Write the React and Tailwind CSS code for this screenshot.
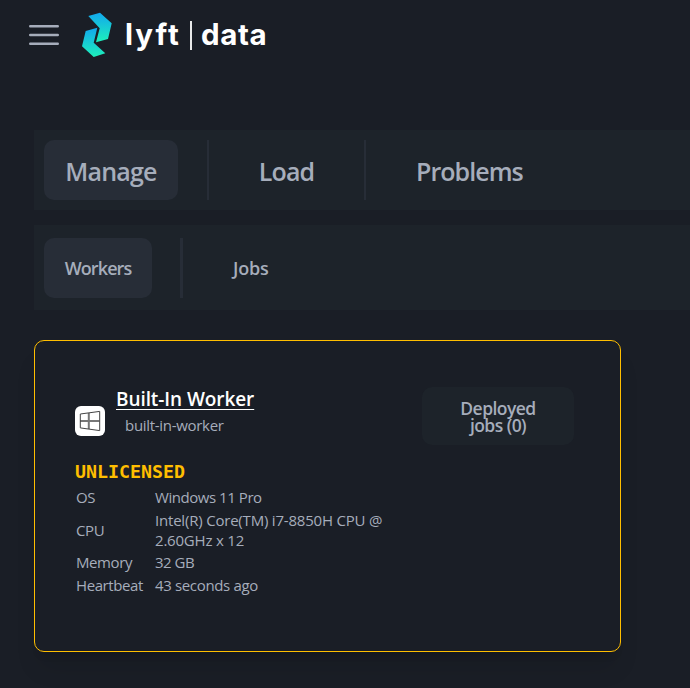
function MenuIcon() {
  return (
    <svg className="mt-[24px] h-[22px] w-[30px] shrink-0" viewBox="0 0 30 22" fill="none" stroke="#a6adbb" strokeWidth="2.4" strokeLinecap="round">
      <path d="M1.2 2.2H28.8M1.2 11H28.8M1.2 19.8H28.8" />
    </svg>
  );
}

function Logo() {
  return (
    <svg className="ml-[22px] mt-[12px] h-[46px] w-[32px] shrink-0" viewBox="81 12 32 46">
      <defs>
        <linearGradient id="top" x1="0" y1="0" x2="0" y2="1">
          <stop offset="0" stopColor="#12a8ee" />
          <stop offset="1" stopColor="#1df0ba" />
        </linearGradient>
      </defs>
      <path fill="url(#top)" d="M88.3 16 100 12.7 111.7 23.3 108 39 96 42.3 99.7 28.2Z" />
      <path fill="url(#top)" d="M85.7 31 97.3 27.7 93.7 42.7 105.3 53.3 93.7 57 82 46.3Z" />
    </svg>
  );
}

function WindowsIcon() {
  return (
    <span className="mt-[19px] flex h-[30px] w-[30px] items-center justify-center rounded-[6px] bg-white">
      <svg className="h-[22px] w-[22px]" viewBox="0 0 22 22" fill="none">
        <path stroke="#777" strokeWidth="2" d="M1 10.9H20.5M9.8 3V19" />
        <path stroke="#444" strokeWidth="1" d="M1.3 4 20.7 1.4V20.6L1.3 17.9Z" />
      </svg>
    </span>
  );
}

const rows = [
  { label: "OS", value: "Windows 11 Pro", height: "h-[23px]", fit: "tracking-[-0.45px]" },
  { label: "CPU", value: "Intel(R) Core(TM) i7-8850H CPU @ 2.60GHz x 12", height: "h-[43px]", fit: "tracking-[-0.2px]" },
  { label: "Memory", value: "32 GB", height: "h-[22px]", fit: "tracking-[-0.5px]" },
  { label: "Heartbeat", value: "43 seconds ago", height: "h-[23px]", fit: "tracking-[-0.35px]" },
];

export default function App() {
  return (
    <div className="h-[688px] w-[690px] overflow-hidden bg-[#1a1e26] font-['Open_Sans','Noto_Sans',sans-serif] text-[#a6adbb]">
      <header className="flex h-[130px] items-start pl-[29px]">
        <MenuIcon />
        <Logo />
        <div className="ml-[12px] mt-[20px] flex h-[30px] items-center font-[Inter,'Liberation_Sans',sans-serif] text-[29.5px] font-bold leading-[30px] text-white">
          <span className="w-[65px] pb-[2px] tracking-[2px]">lyft</span>
          <span className="h-[29px] w-[1.5px] bg-white/90" />
          <span className="ml-[9.5px] pb-[2px] tracking-[0.6px]">data</span>
        </div>
      </header>

      <nav className="ml-[34px] flex h-20 items-center bg-[#1d232a] pl-[10px] text-[25px] font-semibold tracking-[-0.8px]">
        <span className="flex h-[60px] w-[134px] items-center justify-center rounded-[10px] bg-[#272d37] pt-[3px]">Manage</span>
        <span className="ml-[29px] h-[60px] w-[2px] bg-[#272d37]" />
        <span className="w-[155px] pt-[3px] text-center">Load</span>
        <span className="h-[60px] w-[2px] bg-[#272d37]" />
        <span className="ml-[50px] pt-[3px] tracking-[-0.95px]">Problems</span>
      </nav>

      <nav className="ml-[34px] mt-[15px] flex h-[85px] items-center bg-[#1d232a] pl-[10px] text-[18px] font-semibold">
        <span className="flex h-[60px] w-[108px] items-center justify-center rounded-[10px] bg-[#272d37] pt-[2px] tracking-[-0.9px]">Workers</span>
        <span className="ml-[28px] h-[60px] w-[3px] bg-[#272d37]" />
        <span className="ml-[50px] pt-[2px] tracking-[-0.2px]">Jobs</span>
      </nav>

      <section className="ml-[34px] mt-[30px] h-[312px] w-[587px] rounded-[10px] border border-[#ffbe00] pl-[40px] pt-[46px] shadow-xl">
        <div className="flex h-[74px] items-start">
          <WindowsIcon />
          <div className="ml-[11px] w-[306px]">
            <div className="text-[19px] font-semibold leading-[24px] tracking-[-0.08px] text-white underline decoration-1 underline-offset-[3px]">Built-In Worker</div>
            <div className="pl-[9px] pt-[4px] text-[15px] leading-[20px] tracking-[-0.3px]">built-in-worker</div>
          </div>
          <button className="flex h-[58px] w-[152px] items-center justify-center rounded-[10px] bg-[#1d232a] px-8 pt-[2px] text-center text-[17.5px] font-semibold leading-[17.5px] tracking-[-0.55px]">Deployed jobs (0)</button>
        </div>
        <div className="h-[24px] font-['DejaVu_Sans_Mono',monospace] text-[18.3px] font-bold leading-[22px] text-[#ffbe00]">UNLICENSED</div>
        <div className="w-[340px] pl-px text-[15px] leading-[20px]">
          {rows.map((row) => (
            <div key={row.label} className={"flex items-center " + row.height}>
              <span className="w-[79px] shrink-0 tracking-[-0.4px]">{row.label}</span>
              <span className={"w-[245px] " + row.fit}>{row.value}</span>
            </div>
          ))}
        </div>
      </section>
    </div>
  );
}
